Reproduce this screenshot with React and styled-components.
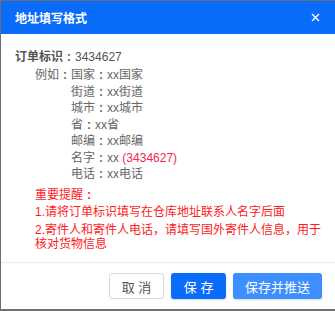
import React from "react";
import styled, { createGlobalStyle } from "styled-components";

const GlobalStyle = createGlobalStyle`
  html, body {
    margin: 0;
    padding: 0;
    background: #6f6f6f;
  }
  body {
    font-family: "Liberation Sans", "Noto Sans CJK SC", sans-serif;
  }
`;

const Overlay = styled.div`
  width: 335px;
  height: 311px;
  padding: 1px 0 2px 1px;
  box-sizing: border-box;
  overflow: hidden;
`;

const Modal = styled.div`
  width: 334px;
  height: 308px;
  background: #fff;
  display: flex;
  flex-direction: column;
`;

const Header = styled.div`
  height: 33px;
  background: #0a6cfb;
  display: flex;
  align-items: center;
  justify-content: space-between;
  padding: 0 14px 0 14px;
  color: #fff;
  font-size: 12px;
  font-weight: bold;
`;

const Close = styled.button`
  width: 12px;
  height: 12px;
  padding: 0;
  border: 0;
  background: none;
  display: flex;
  align-items: center;
  justify-content: center;
  cursor: pointer;
`;

const Body = styled.div`
  flex: 1;
  padding: 15px 9px 0 14px;
  font-size: 12px;
  color: #666;
  line-height: 16.5px;
`;

// full-width colon, dots centred in a 1em cell as in the original font
const Colon = styled.span`
  display: inline-block;
  width: 1em;
  text-align: center;
  font-weight: bold;
`;

const OrderLine = styled.div`
  color: #555;
  white-space: nowrap;
  b {
    font-weight: bold;
  }
`;

const Example = styled.div`
  display: grid;
  grid-template-columns: 36px 1fr;
  margin: 1.5px 0 0 20px;
  white-space: nowrap;
`;

const Row = styled.div`
  white-space: nowrap;
`;

const Hint = styled.span`
  color: #f0284a;
`;

const Notice = styled.div`
  margin: 5px 0 0 20px;
  color: #ff1a1a;
  line-height: 14px;
  p {
    margin: 3.5px 0 0;
  }
  p:first-child {
    margin-top: 0;
  }
`;

const Footer = styled.div`
  border-top: 1px solid #ececec;
  height: 46px;
  display: flex;
  align-items: center;
  justify-content: flex-end;
  gap: 6.5px;
  padding-right: 13px;
`;

const Button = styled.button`
  height: 26px;
  padding: 0 ${(p) => (p.$wide ? 11 : 12)}px;
  border-radius: 3px;
  font-family: "Liberation Sans", "Noto Sans CJK SC", sans-serif;
  font-size: 13px;
  border: 1px solid ${(p) => (p.$kind === "ghost" ? "#d9d9d9" : "transparent")};
  background: ${(p) =>
    p.$kind === "primary" ? "#0a6cfb" : p.$kind === "light" ? "#3d8eff" : "#fff"};
  color: ${(p) => (p.$kind === "ghost" ? "#555" : "#fff")};
  box-shadow: ${(p) => (p.$kind === "ghost" ? "none" : "0 1px 2px rgba(0,0,0,0.15)")};
  cursor: pointer;
`;

const rows = [
  ["国家", "xx国家"],
  ["街道", "xx街道"],
  ["城市", "xx城市"],
  ["省", "xx省"],
  ["邮编", "xx邮编"],
];

export default function App() {
  return (
    <>
      <GlobalStyle />
      <Overlay>
        <Modal>
          <Header>
            <span>地址填写格式</span>
            <Close aria-label="close">
              <svg width="9" height="9" viewBox="0 0 9 9">
                <path d="M1 1L8 8M8 1L1 8" stroke="#fff" strokeWidth="1.4" />
              </svg>
            </Close>
          </Header>
          <Body>
            <OrderLine>
              <b>
                订单标识<Colon>:</Colon>
              </b>
              3434627
            </OrderLine>
            <Example>
              <span>
                例如<Colon>:</Colon>
              </span>
              <div>
                {rows.map(([k, v]) => (
                  <Row key={k}>
                    {k}
                    <Colon>:</Colon>
                    {v}
                  </Row>
                ))}
                <Row>
                  名字<Colon>:</Colon>xx <Hint>(3434627)</Hint>
                </Row>
                <Row>
                  电话<Colon>:</Colon>xx电话
                </Row>
              </div>
            </Example>
            <Notice>
              <p>
                重要提醒<Colon>:</Colon>
              </p>
              <p>1.请将订单标识填写在仓库地址联系人名字后面</p>
              <p>2.寄件人和寄件人电话，请填写国外寄件人信息，用于核对货物信息</p>
            </Notice>
          </Body>
          <Footer>
            <Button $kind="ghost">取 消</Button>
            <Button $kind="primary">保 存</Button>
            <Button $kind="light" $wide>
              保存并推送
            </Button>
          </Footer>
        </Modal>
      </Overlay>
    </>
  );
}
